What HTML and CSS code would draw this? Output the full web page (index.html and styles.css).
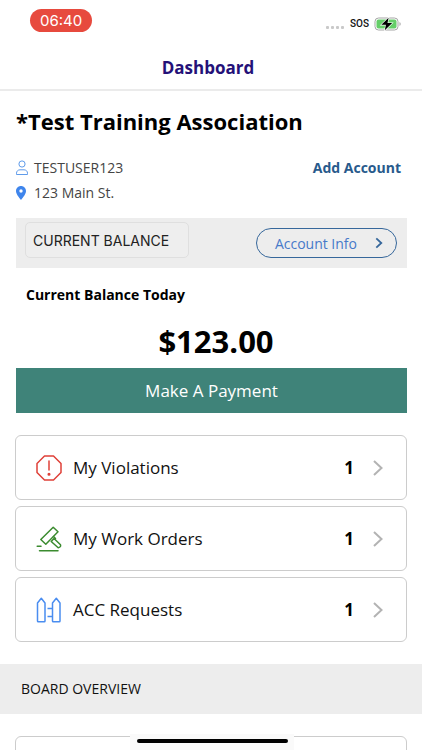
FILE: index.html
```html
<!DOCTYPE html>
<html lang="en">
<head>
<meta charset="utf-8">
<meta name="viewport" content="width=device-width, initial-scale=1">
<title>Dashboard</title>
<link rel="stylesheet" href="styles.css">
</head>
<body>
<div class="status">
  <time class="clock">06:40</time>
  <div class="signals">
    <span class="dots"><i></i><i></i><i></i><i></i></span>
    <span class="sos">SOS</span>
    <svg class="battery" width="28" height="14" viewBox="0 0 28 14" aria-hidden="true">
      <rect x="1" y="1" width="23" height="12" rx="3.5" fill="#fff" stroke="#a5a5a5"/>
      <rect x="2.5" y="2.5" width="20" height="9" rx="2" fill="#65ce68"/>
      <path d="M25.5 5v4c1.6-.6 1.6-3.4 0-4z" fill="#a5a5a5"/>
      <path d="M14.6.8 7.3 7.8h4.6L10.8 13.2l7.4-7.1h-4.7z" fill="#000" stroke="#fff" stroke-width="1.2" paint-order="stroke"/>
    </svg>
  </div>
</div>
<header class="titlebar"><h1>Dashboard</h1></header>

<main>
  <section class="account">
    <h2>*Test Training Association</h2>
    <div class="line">
      <svg width="12" height="16" viewBox="0 0 12 16" fill="none" stroke="#5f9bea" aria-hidden="true">
        <circle cx="6" cy="4" r="3.1"/>
        <path d="M.5 14.5v-1.3C.5 11.200 2 9.800 4 9.800h4c2 0 3.500 1.400 3.500 3.400v1.300z" stroke-linejoin="round"/>
      </svg>
      <span>TESTUSER123</span>
      <a class="add" href="#add">Add Account</a>
    </div>
    <div class="line">
      <svg width="12" height="16" viewBox="0 0 12 16" aria-hidden="true">
        <path fill="#3f85ec" fill-rule="evenodd" d="M5 1C2.200 1 0 3.200 0 6c0 3 3 6.500 5 9 2-2.500 5-6 5-9 0-2.800-2.200-5-5-5zm0 3.300a1.700 1.700 0 1 1 0 3.400 1.700 1.700 0 0 1 0-3.400z"/>
      </svg>
      <span>123 Main St.</span>
    </div>
  </section>

  <section class="balance">
    <div class="bar">
      <select class="picker" aria-label="Balance view"><option>CURRENT BALANCE</option></select>
      <a class="info" href="#info">Account Info
        <svg width="8" height="12" viewBox="0 0 8 12" fill="none" stroke="#36679b" stroke-width="1.800" aria-hidden="true"><path d="M1.300 1.300 6.300 6l-5 4.700"/></svg>
      </a>
    </div>
    <h3>Current Balance Today</h3>
    <p class="amount">$123.00</p>
    <button class="pay" type="button">Make A Payment</button>
  </section>

  <nav class="cards">
    <a class="card" href="#violations">
      <svg class="icon" viewBox="0 0 28 28" fill="none" stroke="#df4038" stroke-width="1.500" stroke-linejoin="round" stroke-linecap="round" aria-hidden="true">
        <path d="M9.500 2h9L26 9.500v9L18.500 26h-9L2 18.500v-9z"/>
        <path d="M14 7v9"/><circle cx="14" cy="20.300" r=".8" fill="#df4038"/>
      </svg>
      <span class="name">My Violations</span><b>1</b>
      <svg class="chev" width="12" height="18" viewBox="0 0 12 18" aria-hidden="true"><path d="M2 2l7.500 7L2 16"/></svg>
    </a>
    <a class="card" href="#orders">
      <svg class="icon" viewBox="0 0 28 28" fill="none" stroke="#3b8b2f" stroke-width="1.500" stroke-linejoin="round" stroke-linecap="round" aria-hidden="true">
        <path d="M18.200 2.200 23 6.800 10.800 19.200 5.800 14.500z"/>
        <path d="M16.200 16.500 19 13.500 25.500 19.800q.8 2.200-2.300 3z"/>
        <path d="M18.500 11.500l2 2M2.200 21.300H6M4.500 25.800H23"/>
      </svg>
      <span class="name">My Work Orders</span><b>1</b>
      <svg class="chev" width="12" height="18" viewBox="0 0 12 18" aria-hidden="true"><path d="M2 2l7.500 7L2 16"/></svg>
    </a>
    <a class="card" href="#acc">
      <svg class="icon" viewBox="0 0 28 28" fill="none" stroke="#4a8df0" stroke-width="1.500" stroke-linejoin="round" aria-hidden="true">
        <path d="M6.300 2.300 10 7v18q0 .8-.8.8H3.300q-.8 0-.8-.8V7zM21.300 2.300 25 7v18q0 .8-.8.8h-5.900q-.8 0-.8-.8V7zM12.500 12.500H17.500M12.500 20.500H17.500"/>
      </svg>
      <span class="name">ACC Requests</span><b>1</b>
      <svg class="chev" width="12" height="18" viewBox="0 0 12 18" aria-hidden="true"><path d="M2 2l7.500 7L2 16"/></svg>
    </a>
  </nav>

  <h2 class="overview">BOARD OVERVIEW</h2>
  <div class="cards"><div class="card"></div></div>
</main>
<div class="home"><span></span></div>
</body>
</html>
```
FILE: styles.css
```css
* { box-sizing: border-box; }
html { height: 100%; overflow: hidden; }
body {
  margin: 0;
  height: 100%;
  overflow: hidden;
  background: #fff;
  color: #111;
  font-family: "Open Sans", "Noto Sans", sans-serif;
  font-size: 14px;
}
h1, h2, h3, p { margin: 0; }
a { color: inherit; text-decoration: none; }
svg { flex: none; }

.status {
  display: flex;
  justify-content: space-between;
  align-items: center;
  height: 48px;
  padding: 0 20px 8px 30px;
  font-family: Inter, sans-serif;
}
.clock {
  padding: 0 10px;
  border-radius: 12px;
  background: #e74a3e;
  color: #fff;
  font-size: 15px;
  line-height: 23px;
}
.signals { display: flex; align-items: center; padding-top: 7px; }
.dots { display: flex; gap: 2px; padding-top: 8px; margin-right: 6px; }
.dots i { width: 3px; height: 3px; border-radius: 1px; background: #c9c9c9; }
.sos {
  margin-right: 5px;
  color: #111;
  font-family: Roboto, sans-serif;
  font-size: 10px;
  font-weight: 500;
}

.titlebar {
  height: 43px;
  border-bottom: 2px solid #ebebeb;
  color: #241178;
  text-align: center;
}
.titlebar h1 { padding-right: 6px; font-size: 17px; line-height: 40px; }

.account { padding: 14px 16px 13px; }
.account h2 { margin-bottom: 18px; color: #000; font-size: 22px; line-height: 32px; }
.line {
  display: flex;
  align-items: center;
  gap: 6px;
  color: #444;
  line-height: 25px;
}
.add { margin-left: auto; padding-right: 5px; color: #285a8c; font-weight: 700; }

.balance { padding: 0 15px 0 16px; }
.bar {
  display: flex;
  justify-content: space-between;
  align-items: center;
  height: 50px;
  padding: 0 10px 0 9px;
  background: #ededed;
}
.picker {
  width: 164px;
  height: 36px;
  margin-bottom: 6px;
  padding: 0 7px;
  appearance: none;
  border: 1px solid #dfdfdf;
  border-radius: 5px;
  background: #eee;
  color: #222;
  font-family: Inter, sans-serif;
  font-size: 14px;
}
.info {
  display: flex;
  align-items: center;
  gap: 18px;
  height: 30px;
  padding: 0 13px 0 18px;
  border: 1px solid #36679b;
  border-radius: 15px;
  color: #4779c9;
}
.balance h3 { padding: 14px 10px; color: #000; font-size: 14px; line-height: 25px; }
.amount {
  padding: 0 0 6px 9px;
  color: #000;
  font-size: 31px;
  font-weight: 700;
  line-height: 41px;
  text-align: center;
}
.pay {
  display: block;
  width: 100%;
  height: 45px;
  border: 0;
  background: #3f8379;
  color: #fff;
  font-family: inherit;
  font-size: 17px;
}

.cards { display: grid; gap: 6px; padding: 22px 15px; }
.card {
  display: flex;
  align-items: center;
  height: 65px;
  padding: 0 22px 0 19px;
  border: 1px solid #ccc;
  border-radius: 6px;
  background: #fff;
  font-size: 17px;
}
.icon { width: 28px; height: 28px; margin-right: 10px; }
.name { flex: 1; }
.card b { margin-right: 18px; color: #000; }
.chev { fill: none; stroke: #b3b3b3; stroke-width: 2; }

.overview {
  padding: 0 21px;
  background: #ededed;
  font-size: 14px;
  font-weight: 400;
  line-height: 50px;
}

.home {
  position: fixed;
  bottom: 0;
  left: 50%;
  width: 164px;
  height: 16px;
  margin-left: -81px;
  background: #fafafa;
}
.home span {
  display: block;
  height: 4px;
  margin: 5px 6px 0 7px;
  border-radius: 2px;
  background: #000;
}
```
